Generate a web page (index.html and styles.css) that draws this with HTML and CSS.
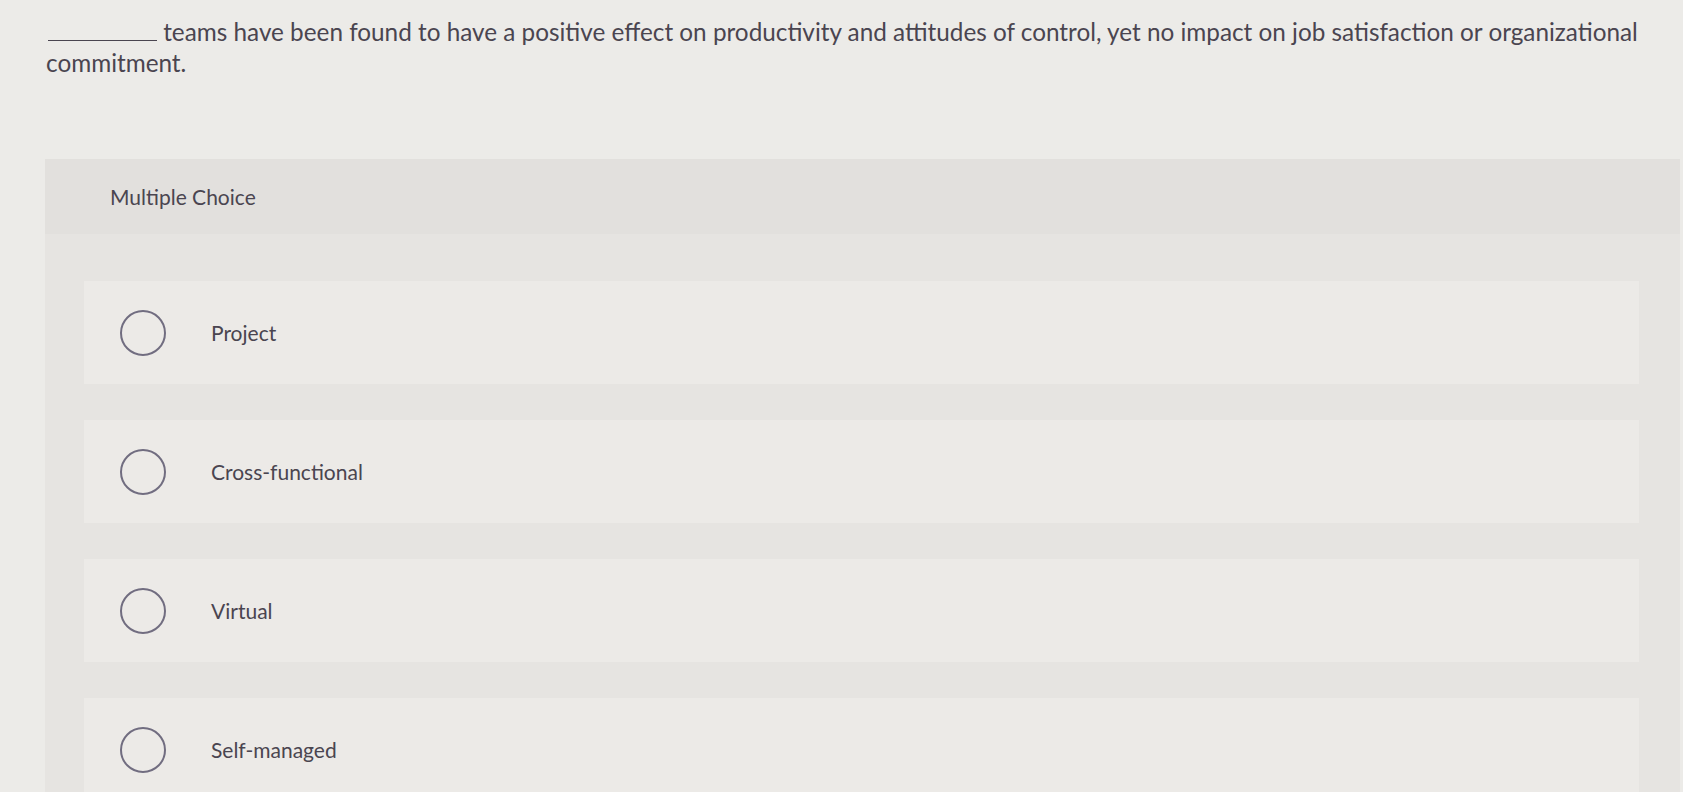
FILE: index.html
```html
<!DOCTYPE html>
<html>
<head>
<meta charset="utf-8">
<link rel="stylesheet" href="styles.css">
</head>
<body>
<div class="question">
  <p><span class="blank"></span> teams have been found to have a positive effect on productivity and attitudes of control, yet no impact on job satisfaction or organizational commitment.</p>
</div>
<div class="panel">
  <div class="panel-head">Multiple Choice</div>
  <div class="options">
    <div class="option"><span class="radio"></span><span class="label">Project</span></div>
    <div class="option"><span class="radio"></span><span class="label">Cross-functional</span></div>
    <div class="option"><span class="radio"></span><span class="label">Virtual</span></div>
    <div class="option"><span class="radio"></span><span class="label">Self-managed</span></div>
  </div>
</div>
</body>
</html>
```
FILE: styles.css
```css
html, body {
  margin: 0;
  padding: 0;
}
body {
  background: #ecebe8;
  font-family: Lato, "Open Sans", sans-serif;
  color: #4a4550;
  width: 1683px;
  height: 792px;
  overflow: hidden;
}
.question {
  width: 1645px;
  height: 78px;
  padding: 16px 0 0 46px;
  box-sizing: border-box;
}
.question p {
  margin: 0;
  font-size: 24.3px;
  line-height: 31px;
}
.blank {
  display: inline-block;
  width: 109px;
  border-bottom: 1px solid #4a4550;
  vertical-align: baseline;
  margin-left: 2px;
}
.panel {
  margin: 81px 3px 0 45px;
  background: #e6e4e1;
  height: 640px;
}
.panel-head {
  background: #e2e0dd;
  height: 75px;
  display: flex;
  align-items: center;
  padding-left: 65px;
  font-size: 21px;
}
.options {
  padding: 47px 41px 0 39px;
  display: flex;
  flex-direction: column;
  gap: 36px;
}
.option {
  background: #eceae7;
  height: 103px;
  display: flex;
  align-items: center;
  padding-left: 36px;
}
.radio {
  width: 42px;
  height: 42px;
  border: 2px solid #716d80;
  border-radius: 50%;
  flex: none;
}
.label {
  margin-left: 45px;
  font-size: 21px;
}
```
